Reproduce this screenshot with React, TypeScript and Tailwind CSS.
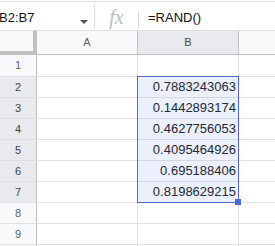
import React from "react";

const values = [
  "",
  "0.7883243063",
  "0.1442893174",
  "0.4627756053",
  "0.4095464926",
  "0.695188406",
  "0.8198629215",
  "",
  "",
  "",
];

const App = () => {
  return (
    <div
      className="relative w-[275px] h-[246px] overflow-hidden bg-white text-[#222]"
      style={{ fontFamily: '"Liberation Sans", Arial, sans-serif' }}
    >
      {/* formula bar */}
      <div className="pt-px">
        <div className="flex h-[30px] border-y border-[#e0e0e0]">
          <div className="relative flex w-[94px] items-center pt-[4px]">
            <span className="ml-[-1px] text-[13px] text-[#111]">B2:B7</span>
            <span className="absolute left-[80px] top-[18px] h-0 w-0 border-x-[4px] border-t-[4px] border-x-transparent border-t-[#555]" />
          </div>
          <div className="mt-[3px] h-[23px] w-px bg-[#dadce0]" />
          <div className="flex w-[43px] items-center justify-center pt-[1px]">
            <span
              className="text-[20px] italic text-[#bdbdbd]"
              style={{ fontFamily: '"Liberation Serif", "Times New Roman", serif' }}
            >
              fx
            </span>
          </div>
          <div className="mt-[9px] h-[17px] w-px bg-[#dadce0]" />
          <div className="flex items-center pl-[9px] pt-[4px] text-[13px] text-[#111]">
            =RAND()
          </div>
        </div>
      </div>

      {/* column headers */}
      <div className="flex h-[24px]">
        <div className="w-[37px] border-r-4 border-b-4 border-[#c0c0c0] bg-[#f8f9fa]" />
        <div className="flex w-[101px] items-center justify-center border-r border-b border-[#c0c0c0] bg-[#f8f9fa] text-[11px] text-[#5f6368]">
          A
        </div>
        <div className="flex w-[101px] items-center justify-center border-r border-b border-[#c0c0c0] bg-[#e8eaed] text-[11px] text-[#444]">
          B
        </div>
        <div className="flex-1 border-b border-[#c0c0c0] bg-[#f8f9fa]" />
      </div>

      {/* rows */}
      {values.map((v, i) => {
        const selected = i >= 1 && i <= 6;
        return (
          <div key={i} className={`flex ${i === 0 ? "h-[22px]" : "h-[21px]"}`}>
            <div
              className={`flex w-[37px] items-center justify-center border-r border-b border-r-[#c0c0c0] border-b-[#e0e0e0] text-[11px] ${
                selected ? "bg-[#e8eaed] text-[#444]" : "bg-[#f8f9fa] text-[#5f6368]"
              }`}
            >
              {i < 9 ? i + 1 : ""}
            </div>
            <div className="w-[101px] border-r border-b border-[#e2e2e2]" />
            <div className="flex w-[101px] items-center justify-end border-r border-b border-[#e2e2e2] pr-[2px] text-[13px] text-[#222]">
              {v}
            </div>
            <div className="flex-1 border-b border-[#e2e2e2]" />
          </div>
        );
      })}

      {/* selection */}
      <div className="pointer-events-none absolute left-[137px] top-[76px] h-[127px] w-[102px] border border-[#4a6cd4] bg-[#3f6ae0]/10" />
      <div className="absolute left-[235px] top-[199px] h-[6px] w-[6px] bg-[#4a6cd4]" />
    </div>
  );
};

export default App;
